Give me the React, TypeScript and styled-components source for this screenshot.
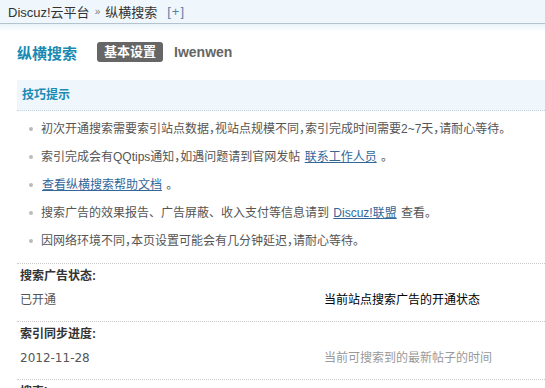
import styled, { createGlobalStyle } from "styled-components";

const GlobalStyle = createGlobalStyle`
  html, body {
    margin: 0;
    padding: 0;
    background: #fff;
    font-family: "Liberation Sans", "Noto Sans CJK SC", sans-serif;
    font-size: 12px;
    color: #333;
  }
`;

const tips = [
  { id: 1, text: "初次开通搜索需要索引站点数据，视站点规模不同，索引完成时间需要2~7天，请耐心等待。", tight: true },
  { id: 2, text: "索引完成会有QQtips通知，如遇问题请到官网发帖 ", link: "联系工作人员", after: " 。", tight: true },
  { id: 3, text: "", link: "查看纵横搜索帮助文档", after: " 。", tight: true },
  { id: 4, text: "搜索广告的效果报告、广告屏蔽、收入支付等信息请到  ", link: "Discuz!联盟", after: "  查看。" },
  { id: 5, text: "因网络环境不同，本页设置可能会有几分钟延迟，请耐心等待。", tight: true },
];

function App() {
  return (
    <Page>
      <GlobalStyle />
      <TopBar>
        <Crumb>Discuz!云平台</Crumb>
        <Sep>»</Sep>
        <Crumb>纵横搜索</Crumb>
        <Plus>[+]</Plus>
      </TopBar>
      <Shadow />
      <Content>
        <TitleRow>
          <Title>纵横搜索</Title>
          <Tab>基本设置</Tab>
          <User>Iwenwen</User>
        </TitleRow>
        <TipsBox>
          <TipsHead>技巧提示</TipsHead>
          <TipsList>
            {tips.map((t) => (
              <Tip key={t.id} $tight={t.tight}>
                {t.text}
                {t.link && <Link>{t.link}</Link>}
                {t.after}
              </Tip>
            ))}
          </TipsList>
        </TipsBox>
        <Label>搜索广告状态:</Label>
        <ValueRow>
          <Value>已开通</Value>
          <Desc $dark>当前站点搜索广告的开通状态</Desc>
        </ValueRow>
        <Label>索引同步进度:</Label>
        <ValueRow>
          <Value $latin>2012-11-28</Value>
          <Desc>当前可搜索到的最新帖子的时间</Desc>
        </ValueRow>
        <Label>搜索Logo:</Label>
      </Content>
    </Page>
  );
}
export default App;

const Page = styled.div`
  width: 545px;
  height: 388px;
  overflow: hidden;
`;
const TopBar = styled.div`
  height: 23px;
  background: #f0f7fc;
  border-bottom: 1px solid #b4c4cf;
  display: flex;
  align-items: center;
  padding: 0 8px;
  gap: 4px;
  font-size: 13px;
  color: #333;
`;
const Crumb = styled.span``;
const Sep = styled.span`
  font-size: 10px;
  color: #777;
  margin: 0 1px;
`;
const Plus = styled.span`
  color: #5b7fa8;
  margin-left: 6px;
  letter-spacing: 1px;
`;
const Shadow = styled.div`
  height: 8px;
  background: linear-gradient(#eaf4fa, #fff);
`;
const Content = styled.div`
  padding: 0 0 0 17px;
`;
const TitleRow = styled.div`
  display: flex;
  align-items: center;
  height: 30px;
  margin-top: 5px;
`;
const Title = styled.h1`
  margin: 0 20px 0 0;
  font-size: 15px;
  font-weight: bold;
  color: #1b8ab3;
  width: 60px;
`;
const Tab = styled.span`
  background: #666;
  color: #fff;
  font-size: 13px;
  font-weight: bold;
  border-radius: 3px;
  padding: 2px 7px;
  line-height: 16px;
`;
const User = styled.span`
  margin-left: 11px;
  font-size: 14px;
  font-weight: bold;
  color: #666;
`;
const TipsBox = styled.div`
  margin-top: 13px;
  border-bottom: 1px dotted #ccc;
`;
const TipsHead = styled.div`
  height: 30px;
  line-height: 30px;
  background: #eff6fc;
  border-bottom: 1px dotted #c8d6e0;
  padding-left: 5px;
  font-weight: bold;
  color: #1b8ab3;
`;
const TipsList = styled.ul`
  margin: 0;
  padding: 4px 0 8px 24px;
  list-style: none;
`;
const Tip = styled.li<{ $tight?: boolean }>`
  position: relative;
  line-height: 28px;
  color: #555;
  font-feature-settings: ${(p) => (p.$tight ? '"halt"' : "normal")};
  &::before {
    content: "";
    position: absolute;
    left: -12px;
    top: 12px;
    width: 4px;
    height: 4px;
    border-radius: 50%;
    background: #bbb;
  }
`;
const Link = styled.a`
  color: #336699;
  text-decoration: underline;
  margin: 0 1px;
`;
const Label = styled.div`
  padding: 2px 0 0 3px;
  height: 22px;
  line-height: 20px;
  font-weight: bold;
  color: #333;
`;
const ValueRow = styled.div`
  display: flex;
  align-items: flex-start;
  height: 30px;
  padding: 3px 0 0 3px;
  line-height: 18px;
  border-bottom: 1px dotted #ccc;
`;
const Value = styled.span<{ $latin?: boolean }>`
  width: 304px;
  color: #555;
  font-family: ${(p) => (p.$latin ? '"DejaVu Sans", sans-serif' : "inherit")};
`;
const Desc = styled.span<{ $dark?: boolean }>`
  color: ${(p) => (p.$dark ? "#000" : "#999")};
`;
